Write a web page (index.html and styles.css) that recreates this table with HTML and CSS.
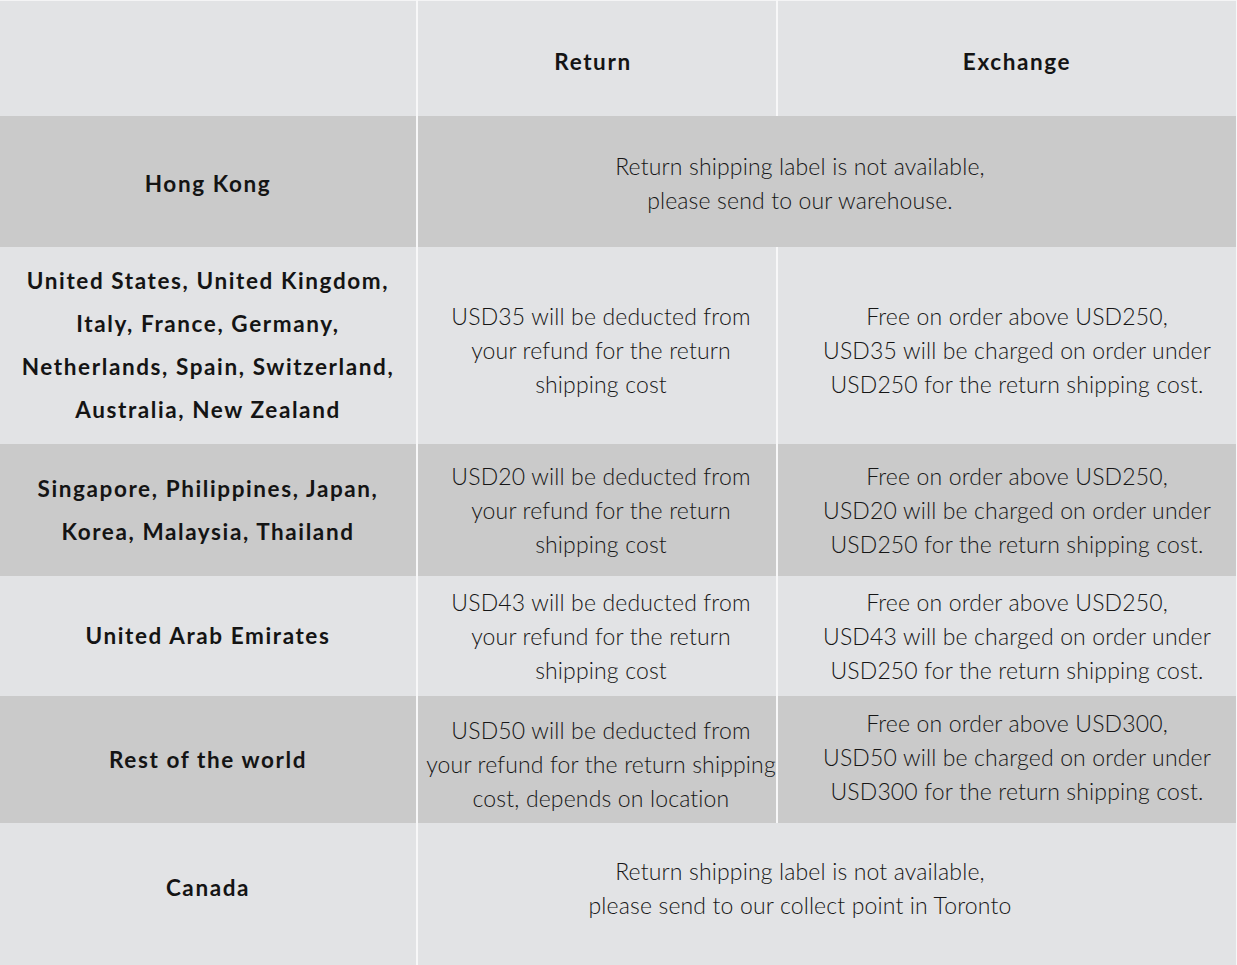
FILE: index.html
```html
<!DOCTYPE html>
<html lang="en">
<head>
<meta charset="utf-8">
<title>Return & Exchange</title>
<link rel="stylesheet" href="styles.css">
</head>
<body>
<table class="policy">
  <colgroup>
    <col class="c1"><col class="c2"><col class="c3">
  </colgroup>
  <tr class="head light">
    <th></th>
    <th class="ret-h">Return</th>
    <th class="exc">Exchange</th>
  </tr>
  <tr class="dark r-hk">
    <th>Hong Kong</th>
    <td class="span" colspan="2">Return shipping label is not available,<br>please send to our warehouse.</td>
  </tr>
  <tr class="light r-us">
    <th>United States, United Kingdom,<br>Italy, France, Germany,<br>Netherlands, Spain, Switzerland,<br>Australia, New Zealand</th>
    <td class="ret">USD35 will be deducted from<br>your refund for the return<br>shipping cost</td>
    <td class="exc">Free on order above USD250,<br>USD35 will be charged on order under<br>USD250 for the return shipping cost.</td>
  </tr>
  <tr class="dark r-sg">
    <th>Singapore, Philippines, Japan,<br>Korea, Malaysia, Thailand</th>
    <td class="ret">USD20 will be deducted from<br>your refund for the return<br>shipping cost</td>
    <td class="exc">Free on order above USD250,<br>USD20 will be charged on order under<br>USD250 for the return shipping cost.</td>
  </tr>
  <tr class="light r-uae">
    <th>United Arab Emirates</th>
    <td class="ret">USD43 will be deducted from<br>your refund for the return<br>shipping cost</td>
    <td class="exc">Free on order above USD250,<br>USD43 will be charged on order under<br>USD250 for the return shipping cost.</td>
  </tr>
  <tr class="dark r-row">
    <th>Rest of the world</th>
    <td class="ret lower">USD50 will be deducted from<br>your refund for the return shipping<br>cost, depends on location</td>
    <td class="exc">Free on order above USD300,<br>USD50 will be charged on order under<br>USD300 for the return shipping cost.</td>
  </tr>
  <tr class="light r-ca">
    <th>Canada</th>
    <td class="span" colspan="2">Return shipping label is not available,<br>please send to our collect point in Toronto</td>
  </tr>
</table>
</body>
</html>
```

FILE: styles.css
```css
html, body {
  margin: 0;
  padding: 0;
  background: #e2e3e5;
}

.policy {
  border-collapse: collapse;
  table-layout: fixed;
  width: 1237px;
  font-family: "Lato", "Noto Sans", sans-serif;
  color: #1a1a1a;
  border-top: 1px solid #f4f4f5;
}

.c1 { width: 417px; }
.c2 { width: 360px; }
.c3 { width: 460px; }

.policy th,
.policy td {
  padding: 0;
  text-align: center;
  vertical-align: middle;
  white-space: nowrap;
  border-right: 2px solid #f7f7f8;
}

.policy th {
  font-weight: 700;
  font-size: 22.5px;
  line-height: 43px;
  letter-spacing: 1.6px;
  color: #141414;
}

.policy td {
  font-weight: 300;
  font-size: 23px;
  line-height: 34px;
  letter-spacing: 0.15px;
  color: #161616;
}

.policy .ret { padding-left: 8px; }
.policy .ret-h { padding-right: 8px; }
.policy .exc { padding-left: 20px; }
.policy .span { padding-right: 54px; }

.light { background: #e2e3e5; }
.dark { background: #cacaca; }

.head { height: 115px; }
.head th { padding-top: 6px; }
.r-hk { height: 131px; }
.r-hk th, .r-hk td { padding-top: 4px; }
.r-us { height: 197px; }
.r-us td { padding-top: 10px; }
.r-sg { height: 132px; }
.r-uae { height: 120px; }
.r-row { height: 127px; }
.r-row td.lower { padding-top: 10px; }
.r-row td.exc { padding-bottom: 4px; }
.r-ca { height: 142px; }
.r-ca th, .r-ca td { padding-bottom: 12px; }
```
